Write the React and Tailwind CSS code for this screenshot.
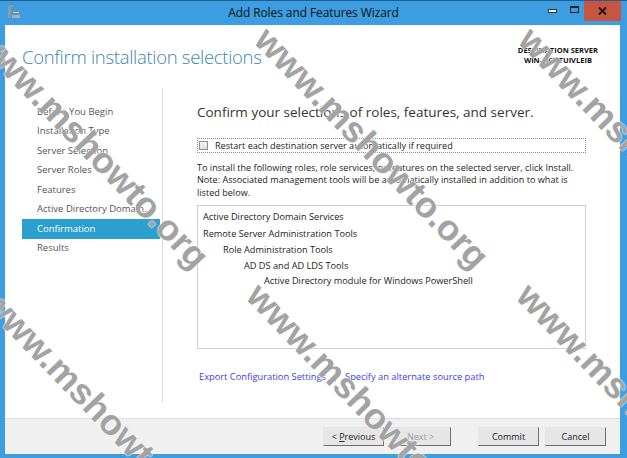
export default function App() {
  const nav = [
    "Before You Begin",
    "Installation Type",
    "Server Selection",
    "Server Roles",
    "Features",
    "Active Directory Domain...",
    "Confirmation",
    "Results",
  ];
  const marks = [
    "left-[-6px] top-[20px]",
    "left-[274px] top-[20px]",
    "left-[538px] top-[20px]",
    "left-[2px] top-[282px]",
    "left-[266px] top-[276px]",
    "left-[536px] top-[276px]",
  ];
  const btn =
    "w-[61px] h-[19px] bg-[#e6e6e6] border border-t-[#e4e4e4] border-l-[#e4e4e4] border-r-[#6f6f6f] border-b-[#6f6f6f] text-[9px] flex items-center justify-center";
  return (
    <div className="relative w-[627px] h-[458px] overflow-hidden bg-[#3c9de0] border-t border-[#1f5f93] flex flex-col font-['Open_Sans',sans-serif] text-[#222]">
      {/* title bar */}
      <div className="relative h-[24px] shrink-0 flex items-center justify-center">
        <svg className="absolute left-[7px] top-[4px]" width="14" height="14" viewBox="0 0 14 14">
          <rect x="1" y="0" width="3" height="13" fill="#8c9aa6" />
          <rect x="1" y="0" width="6" height="2" fill="#8c9aa6" />
          <rect x="5" y="6" width="8" height="3" fill="#7d8892" />
          <rect x="5" y="10" width="8" height="3" fill="#a6b0b8" />
          <rect x="6" y="7" width="6" height="1" fill="#c8d0d6" />
        </svg>
        <span className="text-[12px] leading-none text-[#111] tracking-[-0.1px]">Add Roles and Features Wizard</span>
        <div className="absolute left-[548px] top-[8px] w-[9px] h-[4px] bg-white border border-[#333]" />
        <div className="absolute left-[570px] top-[5px] w-[9px] h-[7px] border border-t-2 border-[#222]" />
        <div className="absolute right-[6px] top-[-1px] w-[37px] h-[21px] bg-[#c75542] flex items-center justify-center">
          <svg width="9" height="8" viewBox="0 0 9 8">
            <path d="M1 0.5 L8 7.5 M8 0.5 L1 7.5" stroke="#1a1a1a" strokeWidth="2" />
          </svg>
        </div>
      </div>

      {/* client */}
      <div className="flex-1 ml-[5px] mr-[7px] mb-[4px] bg-white flex flex-col min-h-0">
        {/* header */}
        <div className="h-[63px] shrink-0 flex items-start justify-between">
          <div className="pl-[17px] pt-[19px] text-[18.5px] font-light leading-[26px] text-[#3b86ae] tracking-[-0.3px] whitespace-nowrap">
            Confirm installation selections
          </div>
          <div className="pr-[22px] pt-[20px] text-center text-[7.5px] font-bold leading-[10px] text-[#111]">
            DESTINATION SERVER
            <br />
            WIN-N6NTUIVLEIB
          </div>
        </div>

        {/* body */}
        <div className="flex-1 flex min-h-0">
          <div className="w-[158px] shrink-0 pb-[16px] flex">
            <div className="flex-1 border-r border-[#dcdcdc] pt-[14px] pl-[17px] pr-[2px] flex flex-col">
              {nav.map((n) => (
                <div
                  key={n}
                  className={
                    n === "Confirmation"
                      ? "h-[19.5px] pl-[15px] flex items-center text-[9.5px] bg-[#2a9fd0] text-white whitespace-nowrap"
                      : "h-[19.5px] pl-[15px] flex items-center text-[9.5px] text-[#555] whitespace-nowrap"
                  }
                >
                  {n}
                </div>
              ))}
            </div>
          </div>

          <div className="flex-1 px-[34px] pt-[15px] flex flex-col">
            <div className="text-[13.5px] leading-[18px] text-[#333] whitespace-nowrap">
              Confirm your selections of roles, features, and server.
            </div>
            <div className="mt-[17px] h-[15px] border border-dotted border-[#8c8c8c] flex items-center pl-[1px]">
              <div className="w-[9px] h-[9px] border border-[#8e8f8f] bg-gradient-to-b from-[#f4f4f4] to-[#e2e2e2]" />
              <span className="ml-[7px] text-[9.1px] leading-none text-[#222] whitespace-nowrap">
                Restart each destination server automatically if required
              </span>
            </div>
            <div className="mt-[9px] text-[9.1px] leading-[12.3px] text-[#222] whitespace-nowrap">
              To install the following roles, role services, or features on the selected server, click Install.
              <br />
              Note: Associated management tools will be automatically installed in addition to what is
              <br />
              listed below.
            </div>
            <div className="mt-[6px] h-[144px] border border-[#cfcfcf] pt-[3px] pl-[5px] text-[9.2px] leading-[15.6px] text-[#222] whitespace-nowrap">
              <div>Active Directory Domain Services</div>
              <div className="mt-[2px]">Remote Server Administration Tools</div>
              <div className="pl-[20px]">Role Administration Tools</div>
              <div className="pl-[41px]">AD DS and AD LDS Tools</div>
              <div className="pl-[61px]">Active Directory module for Windows PowerShell</div>
            </div>
            <div className="mt-[21px] flex items-center text-[9.3px] leading-[14px] whitespace-nowrap pl-[2px]">
              <span className="text-[#3b3bef]">Export Configuration Settings</span>
              <span className="mx-[9px] w-px h-[11px] bg-[#b8b8b8]" />
              <span className="text-[#3b3bef]">Specify an alternate source path</span>
            </div>
          </div>
        </div>

        {/* footer */}
        <div className="h-[36px] shrink-0 bg-[#f0f0f0] border-t border-[#dedede] flex justify-end items-start pt-[8px] pr-[14px]">
          <button className={`${btn} text-[#222]`}>
            &lt;&nbsp;<span className="underline">P</span>revious
          </button>
          <button className={`${btn} ml-[6px] text-[#a0a0a0]`}>
            <span className="underline">N</span>ext&nbsp;&gt;
          </button>
          <button className={`${btn} ml-[27px] text-[#222]`}>Commit</button>
          <button className={`${btn} ml-[6px] text-[#222]`}>Cancel</button>
        </div>
      </div>

      {/* watermark overlay */}
      {marks.map((m) => (
        <span
          key={m}
          className={`pointer-events-none absolute ${m} origin-top-left rotate-[46deg] whitespace-nowrap font-['Liberation_Sans',sans-serif] font-bold text-[36px] leading-none text-[#a3a3a3] [text-shadow:0_0_1px_#fff,0_0_2px_#fff]`}
        >
          www.mshowto.org
        </span>
      ))}
    </div>
  );
}
